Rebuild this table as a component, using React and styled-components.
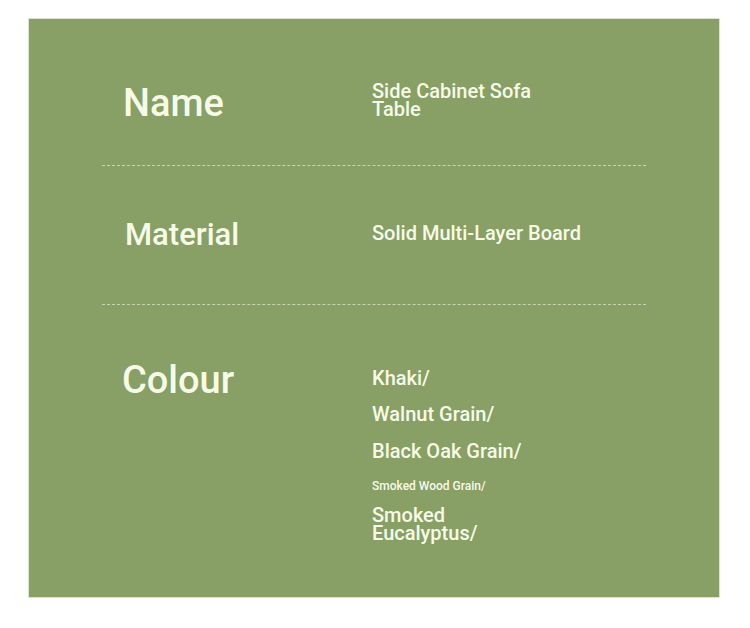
import React from 'react';
import styled, { createGlobalStyle } from 'styled-components';

const GlobalStyle = createGlobalStyle`
  body {
    margin: 0;
    background: #ffffff;
    font-family: Roboto, "Liberation Sans", sans-serif;
  }
`;

// each row: label size, top spacing, value list (space = gap above item)
const specs = [
  {
    label: 'Name',
    size: 38,
    indent: 0,
    top: 62,
    valuesTop: 1,
    height: 147,
    values: [{ text: 'Side Cabinet Sofa Table', size: 20, wrap: true }],
  },
  {
    label: 'Material',
    size: 31,
    indent: 2,
    top: 50,
    valuesTop: 8,
    height: 139,
    values: [{ text: 'Solid Multi-Layer Board', size: 20 }],
  },
  {
    label: 'Colour',
    size: 38,
    indent: -1,
    top: 53,
    valuesTop: 11,
    values: [
      { text: 'Khaki/', size: 20, space: 0 },
      { text: 'Walnut Grain/', size: 20, space: 18 },
      { text: 'Black Oak Grain/', size: 20, space: 19 },
      { text: 'Smoked Wood Grain/', size: 12, space: 18 },
      { text: 'Smoked Eucalyptus/', size: 20, wrap: true, space: 12 },
    ],
  },
];

const App = () => {
  return (
    <>
      <GlobalStyle />
      <Page>
        <Panel>
          {specs.map((spec, i) => (
            <Row
              key={spec.label}
              top={spec.top}
              height={spec.height}
              last={i === specs.length - 1 ? 1 : 0}
            >
              <Label size={spec.size} indent={spec.indent}>
                {spec.label}
              </Label>
              <Values top={spec.valuesTop}>
                {spec.values.map((v) => (
                  <Value
                    key={v.text}
                    size={v.size}
                    space={v.space || 0}
                    wrap={v.wrap ? 1 : 0}
                  >
                    {v.text}
                  </Value>
                ))}
              </Values>
            </Row>
          ))}
        </Panel>
      </Page>
    </>
  );
};

export default App;

// styled component

const Page = styled.div`
  padding: 18px 0 0 28px;
`;

const Panel = styled.section`
  width: 692px;
  height: 580px;
  box-sizing: border-box;
  background-color: #889f65;
  border: 1px solid #dde3d3;
  padding: 0 73px;
`;

const Row = styled.div`
  display: grid;
  grid-template-columns: 249px 1fr;
  align-items: start;
  padding-left: 21px;
  padding-top: ${(props) => props.top}px;
  height: ${(props) => (props.height ? `${props.height}px` : 'auto')};
  box-sizing: border-box;
  border-bottom: ${(props) => (props.last ? 'none' : '1px dashed #c9d5b6')};
`;

const Label = styled.h2`
  margin: 0 0 0 ${(props) => props.indent}px;
  font-size: ${(props) => props.size}px;
  font-weight: 500;
  line-height: 1.2;
  color: #f6fbe8;
`;

const Values = styled.div`
  display: flex;
  flex-direction: column;
  padding-top: ${(props) => props.top}px;
`;

const Value = styled.p`
  margin: ${(props) => props.space}px 0 0;
  width: ${(props) => (props.wrap ? '170px' : 'auto')};
  font-size: ${(props) => props.size}px;
  font-weight: 500;
  line-height: ${(props) => (props.size < 14 ? '16px' : '18px')};
  color: #f6fbe8;
`;
